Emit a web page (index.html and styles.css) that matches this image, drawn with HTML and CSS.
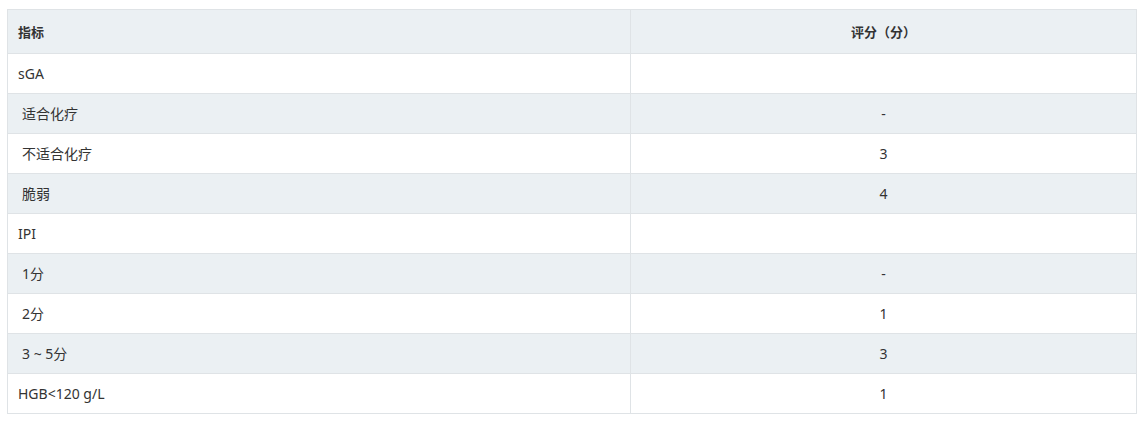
FILE: index.html
```html
<!DOCTYPE html>
<html lang="zh-CN">
<head>
<meta charset="utf-8">
<title>评分表</title>
<link rel="stylesheet" href="styles.css">
</head>
<body>
<div class="wrap">
<table class="score-table">
  <colgroup>
    <col class="col-name">
    <col class="col-score">
  </colgroup>
  <thead>
    <tr><th class="left">指标</th><th>评分（分）</th></tr>
  </thead>
  <tbody>
    <tr><td>sGA</td><td></td></tr>
    <tr><td class="sub">适合化疗</td><td class="num">-</td></tr>
    <tr><td class="sub">不适合化疗</td><td class="num">3</td></tr>
    <tr><td class="sub">脆弱</td><td class="num">4</td></tr>
    <tr><td>IPI</td><td></td></tr>
    <tr><td class="sub">1分</td><td class="num">-</td></tr>
    <tr><td class="sub">2分</td><td class="num">1</td></tr>
    <tr><td class="sub">3 ~ 5分</td><td class="num">3</td></tr>
    <tr><td>HGB&lt;120 g/L</td><td class="num">1</td></tr>
  </tbody>
</table>
</div>
</body>
</html>
```
FILE: styles.css
```css
html, body {
  margin: 0;
  padding: 0;
  background: #ffffff;
}
.wrap {
  padding: 9px 0 0 7px;
}
.score-table {
  width: 1129px;
  border-collapse: collapse;
  table-layout: fixed;
  font-family: "Noto Sans", "Noto Sans CJK SC", sans-serif;
  font-size: 14px;
  color: #333333;
}
.col-name { width: 623px; }
.col-score { width: 506px; }
.score-table th,
.score-table td {
  border: 1px solid #dfe3e6;
  padding: 0 10px;
  line-height: 20px;
}
.score-table th {
  height: 43px;
  background: #ebf0f3;
  font-size: 13px;
  font-weight: 700;
  text-align: center;
  color: #333333;
}
.score-table th.left {
  text-align: left;
}
.score-table td {
  height: 39px;
}
.score-table tbody tr:nth-child(even) td {
  background: #ebf0f3;
}
.score-table td.sub {
  padding-left: 14px;
}
.score-table td.num {
  text-align: center;
}
```
